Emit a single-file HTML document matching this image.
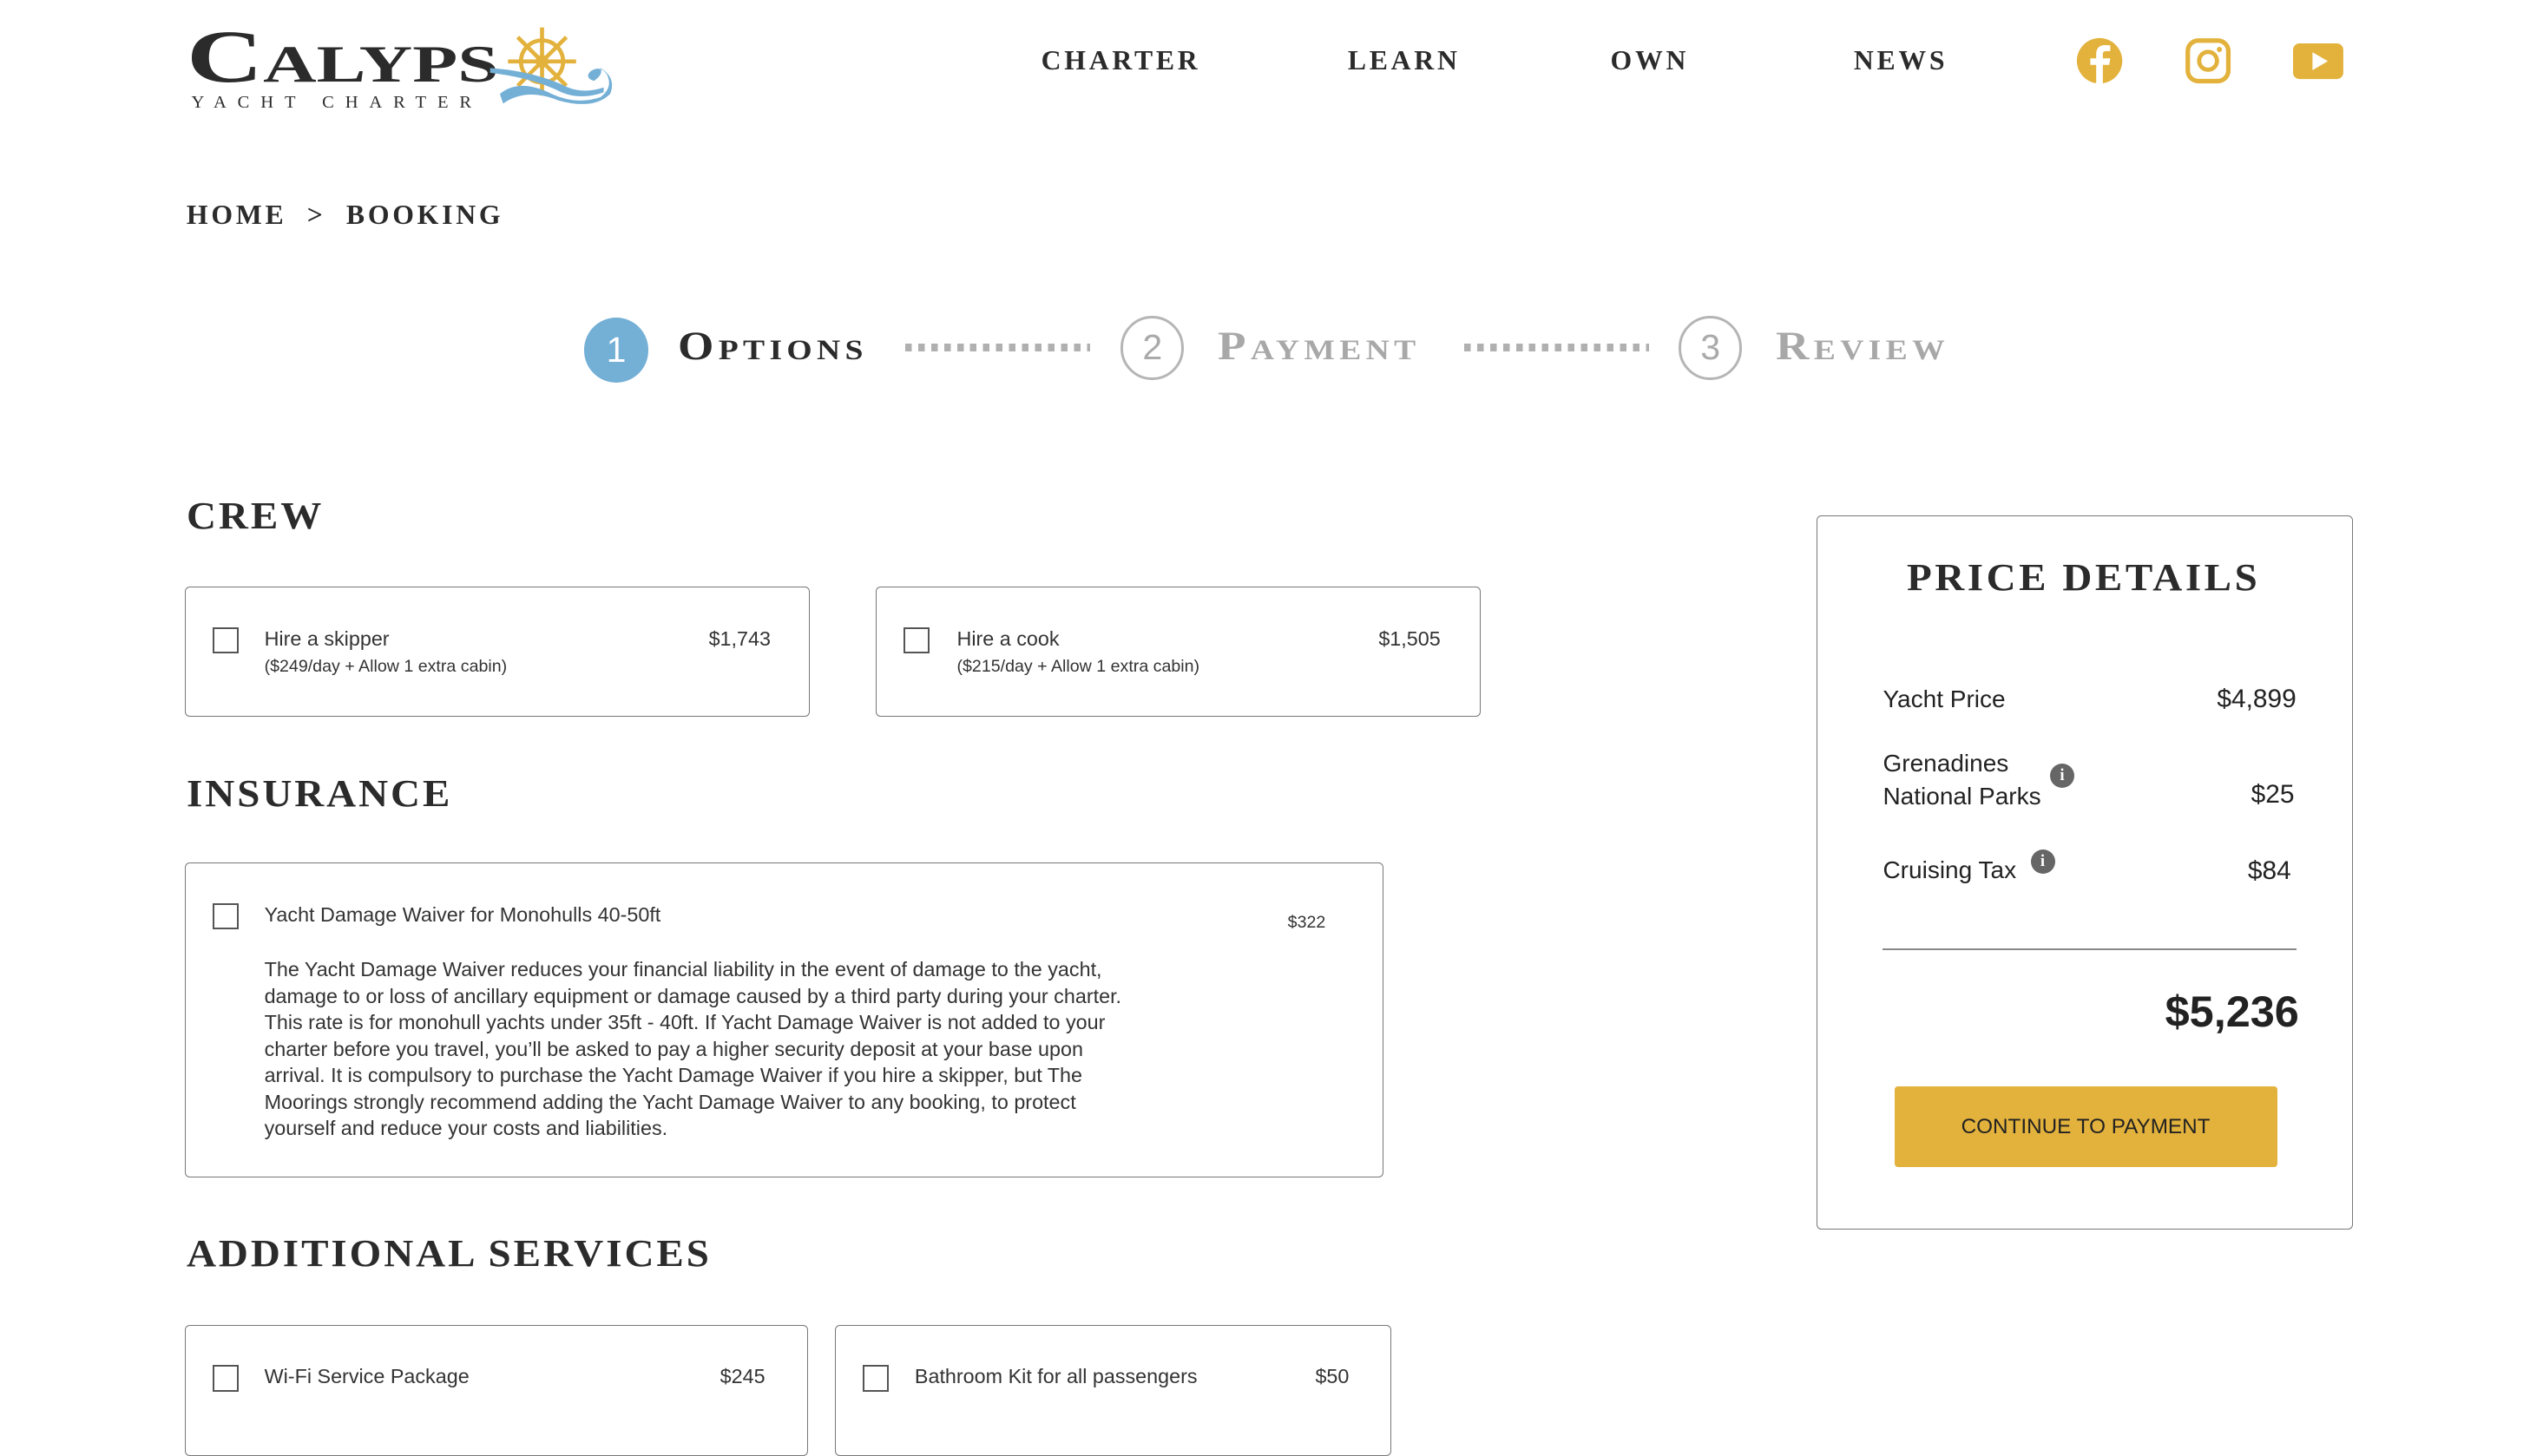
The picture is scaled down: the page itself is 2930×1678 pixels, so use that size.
<!DOCTYPE html>
<html><head><meta charset="utf-8"><style>
html,body{margin:0;padding:0;background:#fff;}
body{width:1568px;height:880px;zoom:1.86862;position:relative;overflow:hidden;font-family:"Liberation Sans",sans-serif;color:#2b2b2b;}
.a{position:absolute;}
.serif{font-family:"Liberation Serif",serif;font-weight:bold;letter-spacing:1.5px;color:#2b2b2b;}
.nav{font-size:17px;top:28px;letter-spacing:2px;}
.h{font-size:24px;letter-spacing:1.5px;transform:scaleX(1.05);transform-origin:left;}
.box{position:absolute;border:1px solid #777;border-radius:3px;background:#fff;}
.cb{position:absolute;width:14px;height:14px;border:1.3px solid #555;}
.t{position:absolute;font-size:12.5px;color:#333;}
.s{position:absolute;font-size:10.5px;color:#333;}
.step{font-size:25px;font-variant:small-caps;letter-spacing:2.5px;transform:scaleX(1.14);transform-origin:left;}
.circ{position:absolute;width:36px;height:36px;border-radius:50%;font-size:22px;text-align:center;line-height:36px;}
.dots{position:absolute;height:5px;background:repeating-linear-gradient(90deg,#b0b0b0 0 4px,transparent 4px 8px);}
.pd{position:absolute;font-size:15px;color:#222;}
.info{display:inline-block;width:15px;height:15px;border-radius:50%;background:#666;color:#fff;font-size:10px;text-align:center;line-height:15px;font-weight:bold;font-family:"Liberation Serif",serif;vertical-align:top;}
</style></head><body>
<!-- logo -->
<div class="a serif" style="left:115px;top:11px;font-size:46px;letter-spacing:0;font-variant:small-caps;line-height:48px;transform:scaleX(1.42);transform-origin:left;">Calyps</div>
<div class="a" style="left:118px;top:57px;font-family:'Liberation Serif',serif;font-size:11px;letter-spacing:6.9px;color:#2b2b2b;">YACHT CHARTER</div>
<svg class="a" style="left:300px;top:14px" width="80" height="56" viewBox="0 0 80 56">
<g stroke="#e3b23c" stroke-width="2.5" fill="none"><circle cx="34" cy="24" r="13"/>
<line x1="34" y1="3" x2="34" y2="45"/><line x1="13" y1="24" x2="55" y2="24"/><line x1="19" y1="9" x2="49" y2="39"/><line x1="49" y1="9" x2="19" y2="39"/></g>
<circle cx="34" cy="24" r="4" fill="#e3b23c"/>
<path d="M8 44 Q20 34 40 44 Q55 51 70 46 Q78 40 74 32 Q70 26 64 30 Q60 34 66 36 Q72 32 70 28 Q80 34 76 44 Q66 54 44 48 Q24 40 10 50 Z" fill="#74afd6"/>
<path d="M2 28 Q30 30 50 40 Q60 44 72 40 L72 43 Q58 48 46 43 Q28 34 2 31Z" fill="#74afd6"/>
</svg>
<div class="a serif nav" style="left:642px">CHARTER</div>
<div class="a serif nav" style="left:831px">LEARN</div>
<div class="a serif nav" style="left:993px">OWN</div>
<div class="a serif nav" style="left:1143px">NEWS</div>
<svg class="a" style="left:1280px;top:23px" width="29" height="29" viewBox="0 0 29 29"><circle cx="14.5" cy="14.5" r="14" fill="#e3b23c"/><path d="M16.5 29V17h4l.6-4h-4.6v-2.5c0-1.200.4-2 2.100-2h2.500V5c-.5-.1-1.900-.2-3.400-.2-3.400 0-5.300 2-5.300 5.700V13H8.8v4h3.6v12z" fill="#fff"/></svg>
<svg class="a" style="left:1347px;top:23px" width="29" height="29" viewBox="0 0 29 29"><rect x="2" y="2" width="25" height="25" rx="6.5" fill="none" stroke="#e3b23c" stroke-width="2.8"/><circle cx="14.5" cy="14.5" r="5.5" fill="none" stroke="#e3b23c" stroke-width="2.6"/><circle cx="21.5" cy="7.5" r="1.6" fill="#e3b23c"/></svg>
<svg class="a" style="left:1414px;top:27px" width="31" height="22" viewBox="0 0 31 22"><rect x="0" y="0" width="31" height="22" rx="4" fill="#e3b23c"/><path d="M12 5.5 L21.5 11 L12 16.5Z" fill="#fff"/></svg>

<div class="a serif" style="left:115px;top:123px;font-size:17px;letter-spacing:2px">HOME &nbsp;&gt;&nbsp; BOOKING</div>

<!-- stepper -->
<div class="circ" style="left:360px;top:196px;width:40px;height:40px;line-height:40px;background:#74afd6;color:#fff;">1</div>
<div class="a serif step" style="left:418px;top:199px">Options</div>
<div class="dots" style="left:558px;top:212px;width:114px"></div>
<div class="circ" style="left:691px;top:195px;border:2px solid #b5b5b5;color:#aaa;">2</div>
<div class="a serif step" style="left:751px;top:199px;color:#a8a8a8">Payment</div>
<div class="dots" style="left:903px;top:212px;width:114px"></div>
<div class="circ" style="left:1035px;top:195px;border:2px solid #b5b5b5;color:#aaa;">3</div>
<div class="a serif step" style="left:1095px;top:199px;color:#a8a8a8">Review</div>

<!-- crew -->
<div class="a serif h" style="left:115px;top:304px">CREW</div>
<div class="box" style="left:114px;top:362px;width:384px;height:79px"></div>
<div class="cb" style="left:131px;top:387px"></div>
<div class="t" style="left:163px;top:387px">Hire a skipper</div>
<div class="s" style="left:163px;top:405px">($249/day + Allow 1 extra cabin)</div>
<div class="t" style="left:437px;top:387px">$1,743</div>
<div class="box" style="left:540px;top:362px;width:372px;height:79px"></div>
<div class="cb" style="left:557px;top:387px"></div>
<div class="t" style="left:590px;top:387px">Hire a cook</div>
<div class="s" style="left:590px;top:405px">($215/day + Allow 1 extra cabin)</div>
<div class="t" style="left:850px;top:387px">$1,505</div>

<!-- insurance -->
<div class="a serif h" style="left:115px;top:475px">INSURANCE</div>
<div class="box" style="left:114px;top:532px;width:738px;height:193px"></div>
<div class="cb" style="left:131px;top:557px"></div>
<div class="t" style="left:163px;top:557px">Yacht Damage Waiver for Monohulls 40-50ft</div>
<div class="s" style="left:794px;top:563px">$322</div>
<div class="t" style="left:163px;top:590px;width:545px;line-height:16.3px">The Yacht Damage Waiver reduces your financial liability in the event of damage to the yacht, damage to or loss of ancillary equipment or damage caused by a third party during your charter. This rate is for monohull yachts under 35ft - 40ft. If Yacht Damage Waiver is not added to your charter before you travel, you’ll be asked to pay a higher security deposit at your base upon arrival. It is compulsory to purchase the Yacht Damage Waiver if you hire a skipper, but The Moorings strongly recommend adding the Yacht Damage Waiver to any booking, to protect yourself and reduce your costs and liabilities.</div>

<!-- additional -->
<div class="a serif h" style="left:115px;top:759px">ADDITIONAL SERVICES</div>
<div class="box" style="left:114px;top:817px;width:383px;height:80px"></div>
<div class="cb" style="left:131px;top:842px"></div>
<div class="t" style="left:163px;top:842px">Wi-Fi Service Package</div>
<div class="t" style="left:444px;top:842px">$245</div>
<div class="box" style="left:515px;top:817px;width:342px;height:80px"></div>
<div class="cb" style="left:532px;top:842px"></div>
<div class="t" style="left:564px;top:842px">Bathroom Kit for all passengers</div>
<div class="t" style="left:811px;top:842px">$50</div>

<!-- price -->
<div class="box" style="left:1120px;top:318px;width:330px;height:439px"></div>
<div class="a serif" style="left:1176px;top:342px;font-size:24px;letter-spacing:1.8px;transform:scaleX(1.05);transform-origin:left">PRICE DETAILS</div>
<div class="pd" style="left:1161px;top:423px">Yacht Price</div>
<div class="pd" style="left:1367px;top:422px;font-size:16px">$4,899</div>
<div class="pd" style="left:1161px;top:461px;line-height:20px">Grenadines<br>National Parks</div>
<div class="a info" style="left:1264px;top:471px">i</div>
<div class="pd" style="left:1388px;top:481px;font-size:16px">$25</div>
<div class="pd" style="left:1161px;top:528px">Cruising Tax</div>
<div class="a info" style="left:1252px;top:524px">i</div>
<div class="pd" style="left:1386px;top:528px;font-size:16px">$84</div>
<div class="a" style="left:1161px;top:585px;width:255px;height:1px;background:#888"></div>
<div class="a" style="left:1335px;top:608px;font-size:27px;font-weight:bold;color:#222">$5,236</div>
<div class="a" style="left:1168px;top:670px;width:236px;height:50px;background:#e3b23c;border-radius:2px;text-align:center;line-height:50px;font-size:13px;color:#222">CONTINUE TO PAYMENT</div>
</body></html>
